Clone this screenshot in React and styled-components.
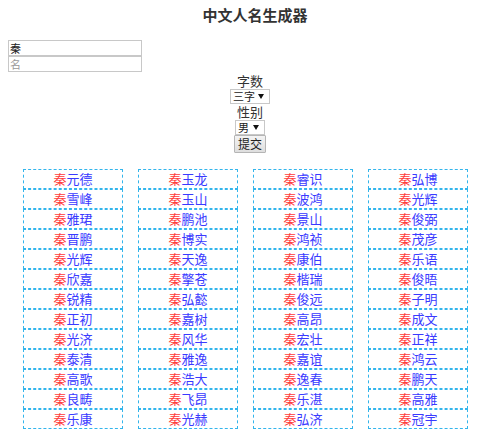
import React from "react";
import styled, { createGlobalStyle } from "styled-components";

const GlobalStyle = createGlobalStyle`
  html, body { margin: 0; padding: 0; background: #fff; }
  body {
    font-family: "Noto Sans CJK SC", "Noto Sans", sans-serif;
    font-size: 13px;
    color: #333;
  }
  * { box-sizing: border-box; }
`;

const Page = styled.div`
  padding: 5px 8px 0 8px;
`;

const Title = styled.h1`
  margin: 0;
  font-size: 15px;
  line-height: 20px;
  font-weight: 700;
  text-align: center;
  color: #333;
  padding-left: 10px;
`;

const Form = styled.form`
  margin-top: 15px;
  display: flex;
  flex-direction: column;
`;

const Input = styled.input`
  display: block;
  width: 134px;
  height: 16px;
  margin: 0;
  padding: 0 1px;
  border: 1px solid #c8c8c8;
  font-family: "Noto Sans CJK SC", sans-serif;
  font-size: 11px;
  line-height: 14px;
  color: #222;
  outline: none;
  &::placeholder { color: #999; }
`;

const Center = styled.div`
  display: flex;
  flex-direction: column;
  align-items: center;
`;

const Label = styled.div`
  font-size: 13px;
  line-height: ${(p) => p.$h}px;
  color: #333;
`;

const SelectWrap = styled.div`
  position: relative;
  width: ${(p) => p.$w}px;
  height: 15px;
`;

const Select = styled.select`
  appearance: none;
  -webkit-appearance: none;
  display: block;
  width: 100%;
  height: 15px;
  margin: 0;
  padding: 0 0 0 2px;
  border: 1px solid #c8c8c8;
  border-radius: 0;
  background: #fff;
  font-family: "Noto Sans CJK SC", sans-serif;
  font-size: 11px;
  line-height: 13px;
  color: #222;
`;

const Arrow = styled.span`
  position: absolute;
  right: 6px;
  top: 5px;
  width: 0;
  height: 0;
  border-left: 3px solid transparent;
  border-right: 3px solid transparent;
  border-top: 5px solid #111;
  pointer-events: none;
`;

const Button = styled.button`
  width: 32px;
  height: 18px;
  margin: 0;
  padding: 0;
  border: 1px solid #b5b5b5;
  border-radius: 1px;
  background: linear-gradient(#f4f4f4, #dedede);
  font-family: "Noto Sans CJK SC", sans-serif;
  font-size: 12px;
  line-height: 16px;
  color: #222;
`;

const Grid = styled.div`
  margin-top: 16px;
  display: flex;
  gap: 15px;
  padding-left: 23px;
`;

const Column = styled.ul`
  list-style: none;
  margin: 0;
  padding: 0;
  width: 100px;
`;

const Item = styled.li`
  height: 20px;
  border: 1px dashed #33b5ec;
  text-align: center;
  font-size: 13px;
  line-height: 18px;
  color: #3a3aff;
`;

const Sur = styled.span`
  color: #ff3b3b;
`;

const columns = [
  ["元德", "雪峰", "雅珺", "晋鹏", "光辉", "欣嘉", "锐精", "正初", "光济", "泰清", "高歌", "良畴", "乐康"],
  ["玉龙", "玉山", "鹏池", "博实", "天逸", "擎苍", "弘懿", "嘉树", "风华", "雅逸", "浩大", "飞昂", "光赫"],
  ["睿识", "波鸿", "景山", "鸿祯", "康伯", "楷瑞", "俊远", "高昂", "宏壮", "嘉谊", "逸春", "乐湛", "弘济"],
  ["弘博", "光辉", "俊弼", "茂彦", "乐语", "俊晤", "子明", "成文", "正祥", "鸿云", "鹏天", "高雅", "冠宇"],
];

export default function App() {
  return (
    <>
      <GlobalStyle />
      <Page>
        <Title>中文人名生成器</Title>
        <Form onSubmit={(e) => e.preventDefault()}>
          <Input defaultValue="秦" />
          <Input placeholder="名" />
          <Center>
            <Label $h={17}>字数</Label>
            <SelectWrap $w={40}>
              <Select defaultValue="3">
                <option value="2">二字</option>
                <option value="3">三字</option>
              </Select>
              <Arrow />
            </SelectWrap>
            <Label $h={16}>性别</Label>
            <SelectWrap $w={30}>
              <Select defaultValue="m">
                <option value="m">男</option>
                <option value="f">女</option>
              </Select>
              <Arrow />
            </SelectWrap>
            <Button type="submit">提交</Button>
          </Center>
        </Form>
      </Page>
      <Grid>
        {columns.map((col, i) => (
          <Column key={i}>
            {col.map((n, j) => (
              <Item key={j}>
                <Sur>秦</Sur>
                {n}
              </Item>
            ))}
          </Column>
        ))}
      </Grid>
    </>
  );
}
